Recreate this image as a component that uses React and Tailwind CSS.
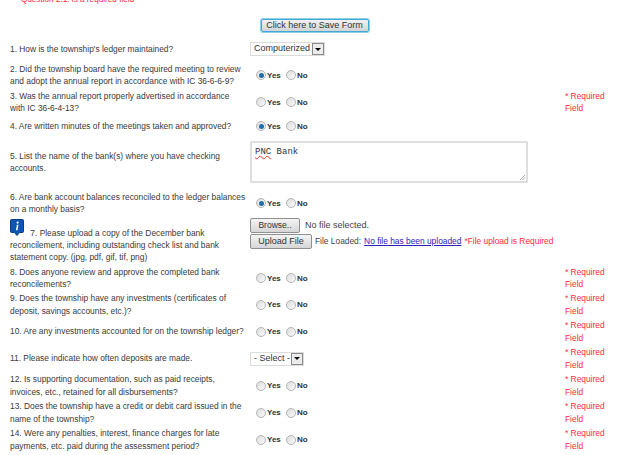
import React from 'react';

const FONT = { fontFamily: '"Liberation Sans", Arial, sans-serif' };

function Radio({ checked }) {
  return (
    <span className="flex h-[10px] w-[10px] shrink-0 items-center justify-center rounded-full border border-[#b4b4b4] bg-gradient-to-br from-[#dcdcdc] to-[#fafafa]">
      {checked && <span className="h-[5px] w-[5px] rounded-full bg-[#1f6fa8]" />}
    </span>
  );
}

function YesNo({ value }) {
  return (
    <div className="flex items-center pl-[6px] text-[8px] font-bold leading-[10px] text-[#333]">
      <Radio checked={value === 'yes'} />
      <span className="ml-[1px] mt-[1px] w-[19px]">Yes</span>
      <Radio />
      <span className="ml-[1px] mt-[1px]">No</span>
    </div>
  );
}

function FakeSelect({ label, width }) {
  return (
    <div className={`flex h-[14px] items-center justify-between border border-[#dcdcdc] bg-white pl-[3px] text-[9px] whitespace-nowrap text-[#333] ${width}`}>
      <span>{label}</span>
      <span className="flex h-[12px] w-[12px] items-center justify-center border border-[#8a8a8a] bg-[#ececec]">
        <span className="h-0 w-0 border-x-[3px] border-t-[3px] border-x-transparent border-t-black" />
      </span>
    </div>
  );
}

function Row({ height, label, children, required }) {
  return (
    <div className={`flex items-center ${height}`}>
      <div className="w-[240px] shrink-0 pr-[4px] text-[8.4px] leading-[12.3px] text-[#3a3a3a]">{label}</div>
      <div className="w-[315px] shrink-0">{children}</div>
      {required && (
        <div className="w-[46px] text-[8.4px] leading-[12.3px] text-[#ff2a3c]">* Required Field</div>
      )}
    </div>
  );
}

function InfoIcon() {
  return (
    <svg width="14" height="17" viewBox="0 0 14 17" className="inline-block align-baseline">
      <path d="M1.5 0.5h11a1 1 0 0 1 1 1v11a1 1 0 0 1-1 1h-3l-2.5 3-2.5-3h-3a1 1 0 0 1-1-1v-11a1 1 0 0 1 1-1z" fill="#0f56b3" stroke="#0b3c7d" />
      <circle cx="7.6" cy="3.6" r="1.1" fill="#fff" />
      <path d="M6.9 5.8h1.6l-1 5.4h-1.6z" fill="#fff" />
    </svg>
  );
}

export default function App() {
  return (
    <div style={FONT} className="h-[455px] w-[624px] overflow-hidden bg-white pl-[10px]">
      <div className="flex h-[3px] items-end pl-[3px] text-[8.2px] leading-[6px] text-[#ff2a3c]">
        <span className="mr-[5px]">•</span>
        <span>Question 2.1: is a required field</span>
      </div>

      <div className="flex justify-center pt-[16px] pr-[5px]">
        <button className="h-[13px] w-[108px] rounded-[2px] border border-[#3fa9d8] bg-gradient-to-b from-[#f2f2f2] to-[#d4d4d4] text-[9px] leading-none whitespace-nowrap text-[#333] ring-1 ring-[#8fd0ea]">
          Click here to Save Form
        </button>
      </div>

      <div className="pt-[7px]">
        <Row height="h-[20px]" label="1. How is the township's ledger maintained?">
          <FakeSelect label="Computerized" width="w-[75px]" />
        </Row>
        <Row height="h-[32px]" label="2. Did the township board have the required meeting to review and adopt the annual report in accordance with IC 36-6-6-9?">
          <YesNo value="yes" />
        </Row>
        <Row height="h-[22px]" required label="3. Was the annual report properly advertised in accordance with IC 36-6-4-13?">
          <YesNo />
        </Row>
        <Row height="h-[26px]" label="4. Are written minutes of the meetings taken and approved?">
          <YesNo value="yes" />
        </Row>
        <Row height="h-[46px]" label="5. List the name of the bank(s) where you have checking accounts.">
          <div className="relative h-[42px] w-[278px] rounded-[1px] border-2 border-[#dedede] bg-white px-[3px] pt-[3px] font-['Liberation_Mono'] text-[9px] leading-[12px] text-[#333]">
            <span className="underline decoration-wavy decoration-[#e33] decoration-[0.5px]">PNC</span> Bank
            <svg width="7" height="7" viewBox="0 0 7 7" className="absolute bottom-0 right-0">
              <path d="M6 1 1 6M6 3.5 3.5 6" stroke="#aaa" strokeWidth="1" />
            </svg>
          </div>
        </Row>
        <Row height="h-[36px]" label="6. Are bank account balances reconciled to the ledger balances on a monthly basis?">
          <YesNo value="yes" />
        </Row>
        <Row height="h-[44px]" label={<div className="-mt-[4px]"><InfoIcon /><span className="ml-[4px]"> 7. Please upload a copy of the December bank</span> reconcilement, including outstanding check list and bank statement copy. (jpg, pdf, gif, tif, png)</div>}>
          <div className="-mt-[19px]">
            <div className="flex items-center text-[9px] text-[#444]">
              <span className="flex h-[15px] w-[50px] items-center justify-center rounded-[2px] border border-[#8f8f8f] bg-gradient-to-b from-[#f4f4f4] to-[#d6d6d6] text-[8.5px] text-[#333]">Browse..</span>
              <span className="ml-[5px]">No file selected.</span>
            </div>
            <div className="mt-[1px] flex items-center text-[8.4px] whitespace-nowrap text-[#444]">
              <span className="flex h-[15px] w-[62px] items-center justify-center rounded-[2px] border border-[#8f8f8f] bg-gradient-to-b from-[#f4f4f4] to-[#d6d6d6] text-[9px] text-[#333]">Upload File</span>
              <span className="ml-[3px]">File Loaded:</span>
              <a className="ml-[3px] text-[#2a22b8] underline">No file has been uploaded</a>
              <span className="ml-[3px] text-[#ff2a3c]">*File upload is Required</span>
            </div>
          </div>
        </Row>
        <Row height="h-[26px]" required label="8. Does anyone review and approve the completed bank reconcilements?">
          <YesNo />
        </Row>
        <Row height="h-[27px]" required label="9. Does the township have any investments (certificates of deposit, savings accounts, etc.)?">
          <YesNo />
        </Row>
        <Row height="h-[27px]" required label="10. Are any investments accounted for on the township ledger?">
          <YesNo />
        </Row>
        <Row height="h-[27px]" required label="11. Please indicate how often deposits are made.">
          <FakeSelect label="- Select -" width="w-[54px]" />
        </Row>
        <Row height="h-[27px]" required label="12. Is supporting documentation, such as paid receipts, invoices, etc., retained for all disbursements?">
          <YesNo />
        </Row>
        <Row height="h-[27px]" required label="13. Does the township have a credit or debit card issued in the name of the township?">
          <YesNo />
        </Row>
        <Row height="h-[27px]" required label="14. Were any penalties, interest, finance charges for late payments, etc. paid during the assessment period?">
          <YesNo />
        </Row>
      </div>
    </div>
  );
}
